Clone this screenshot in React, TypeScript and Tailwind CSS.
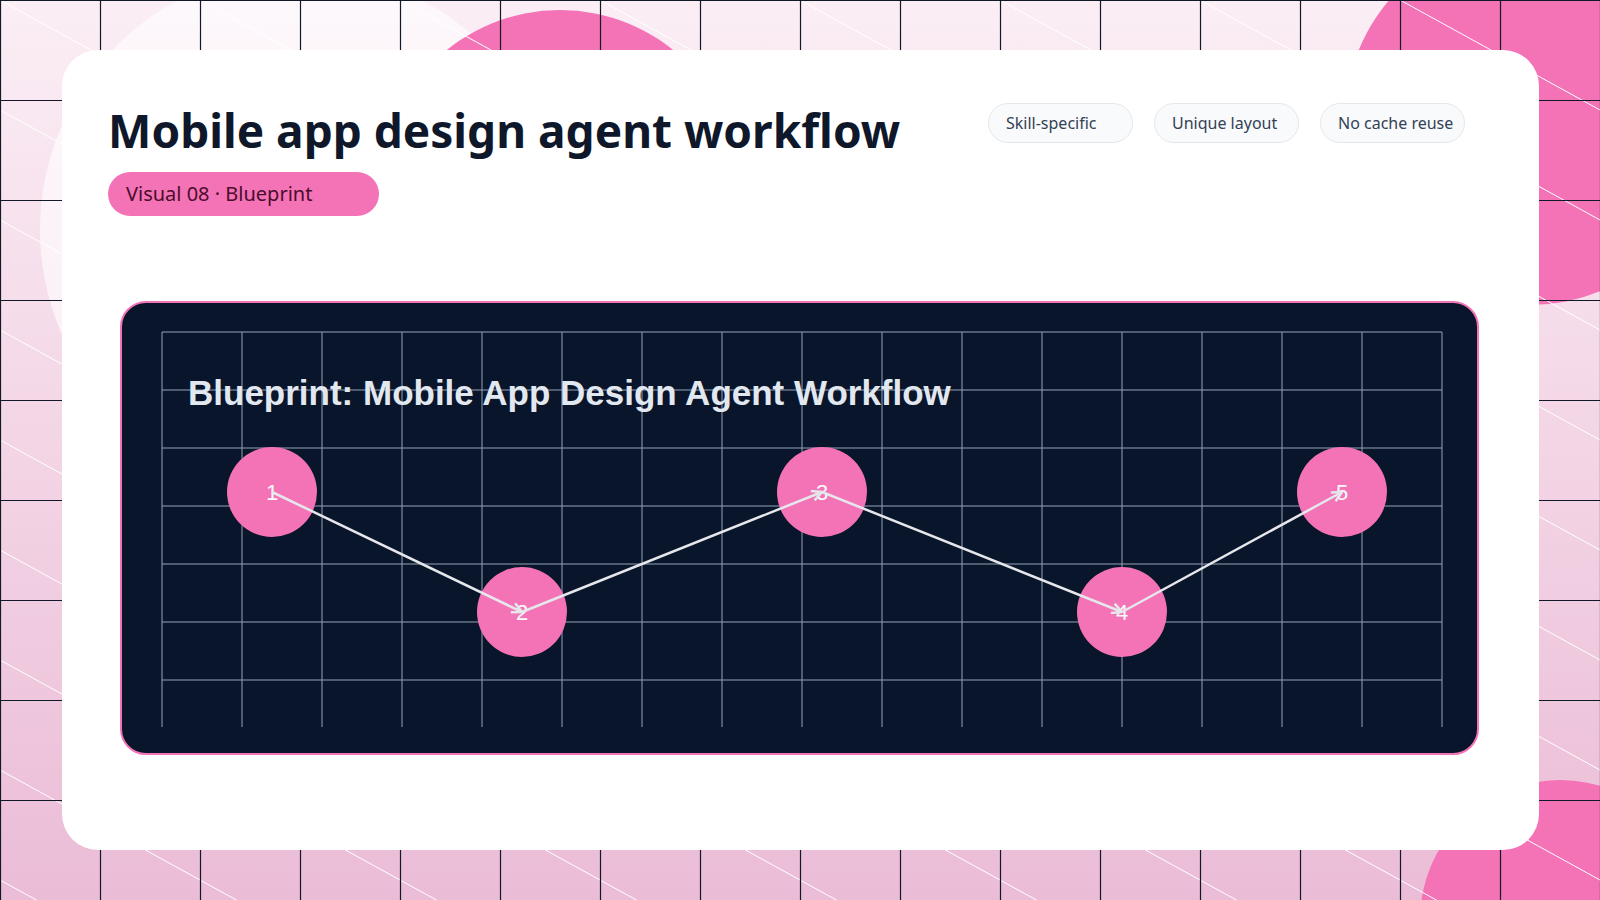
import React from 'react';

const nodes = [
  { n: '1', x: 150, y: 189 },
  { n: '2', x: 400, y: 309 },
  { n: '3', x: 700, y: 189 },
  { n: '4', x: 1000, y: 309 },
  { n: '5', x: 1220, y: 189 },
];

const Backdrop = () => (
  <svg className="absolute inset-0" width="1600" height="900">
    <defs>
      <linearGradient id="bg" x1="0" y1="0" x2="0" y2="1">
        <stop offset="0" stopColor="#fbeef5" />
        <stop offset="1" stopColor="#ebbcd6" />
      </linearGradient>
      <pattern id="diag" width="200" height="110" patternUnits="userSpaceOnUse">
        <line x1="0" y1="0" x2="200" y2="110" stroke="#ffffff" strokeWidth="1" />
        <line x1="-100" y1="55" x2="100" y2="165" stroke="#ffffff" strokeWidth="1" />
        <line x1="100" y1="-55" x2="300" y2="55" stroke="#ffffff" strokeWidth="1" />
      </pattern>
    </defs>
    <rect width="1600" height="900" fill="url(#bg)" />
    <circle cx="300" cy="230" r="260" fill="#ffffff" opacity="0.6" />
    <circle cx="560" cy="190" r="180" fill="#f472b6" />
    <circle cx="1530" cy="120" r="185" fill="#f472b6" />
    <circle cx="1560" cy="920" r="140" fill="#f472b6" />
    <rect width="1600" height="900" fill="url(#diag)" />
    {Array.from({ length: 17 }, (_, i) => (
      <line key={'v' + i} x1={i * 100 + 0.5} y1="0" x2={i * 100 + 0.5} y2="900" stroke="#111827" strokeWidth="1.2" />
    ))}
    {Array.from({ length: 10 }, (_, i) => (
      <line key={'h' + i} x1="0" y1={i * 100 + 0.5} x2="1600" y2={i * 100 + 0.5} stroke="#111827" strokeWidth="1.2" />
    ))}
  </svg>
);

const Blueprint = () => (
  <svg width="1359" height="454" viewBox="0 0 1359 454" className="block">
    <defs>
      <marker id="arr" markerWidth="12" markerHeight="12" refX="11" refY="6" orient="auto" markerUnits="userSpaceOnUse">
        <path d="M1,1 L11,6 L1,11" fill="none" stroke="#e5e7eb" strokeWidth="2.5" />
      </marker>
    </defs>
    {Array.from({ length: 17 }, (_, i) => (
      <line key={'gv' + i} x1={40 + i * 80} y1="29" x2={40 + i * 80} y2="424" stroke="#94a3b8" strokeWidth="1" />
    ))}
    {Array.from({ length: 7 }, (_, i) => (
      <line key={'gh' + i} x1="40" y1={29 + i * 58} x2="1320" y2={29 + i * 58} stroke="#94a3b8" strokeWidth="1" />
    ))}
    <text x="66" y="102" fill="#e2e8f0" fontSize="35" fontWeight="700" fontFamily="Liberation Sans, Arial, sans-serif">
      Blueprint: Mobile App Design Agent Workflow
    </text>
    {nodes.map((p) => (
      <g key={p.n}>
        <circle cx={p.x} cy={p.y} r="45" fill="#f472b6" />
        <text x={p.x} y={p.y + 8} textAnchor="middle" fill="#f8fafc" fontSize="22" fontFamily="Liberation Sans, Arial, sans-serif">
          {p.n}
        </text>
      </g>
    ))}
    {nodes.slice(1).map((p, i) => (
      <line key={'a' + i} x1={nodes[i].x} y1={nodes[i].y} x2={p.x} y2={p.y} stroke="#e5e7eb" strokeWidth="2.5" markerEnd="url(#arr)" />
    ))}
  </svg>
);

export default function App() {
  return (
    <div className="relative w-[1600px] h-[900px] overflow-hidden font-['Liberation_Sans',Arial,sans-serif]">
      <Backdrop />
      <div className="relative pl-[62px] pr-[61px] py-[50px] h-full">
        <div className="h-full bg-white rounded-[36px] pt-[52px]">
          <div className="flex justify-between pl-[46px] pr-[74px]">
            <div>
              <h1 className="text-[46px] leading-[56px] font-bold text-[#0f172a]">Mobile app design agent workflow</h1>
              <div className="mt-[14px] w-[271px] h-[44px] rounded-full bg-[#f472b6] text-[#4a0d2c] text-[20px] flex items-center pl-[18px]">
                Visual 08 · Blueprint
              </div>
            </div>
            <div className="flex gap-[21px] mt-[1px]">
              {['Skill-specific', 'Unique layout', 'No cache reuse'].map((t) => (
                <span key={t} className="w-[145px] h-[40px] rounded-full border border-gray-200 bg-gray-50 text-[16px] text-[#334155] flex items-center pl-[17px]">
                  {t}
                </span>
              ))}
            </div>
          </div>
          <div className="mt-[85px] pl-[58px]">
            <div className="w-[1359px] h-[454px] rounded-[26px] border-2 border-[#f472b6] bg-[#09152b] overflow-hidden">
              <Blueprint />
            </div>
          </div>
        </div>
      </div>
    </div>
  );
}
